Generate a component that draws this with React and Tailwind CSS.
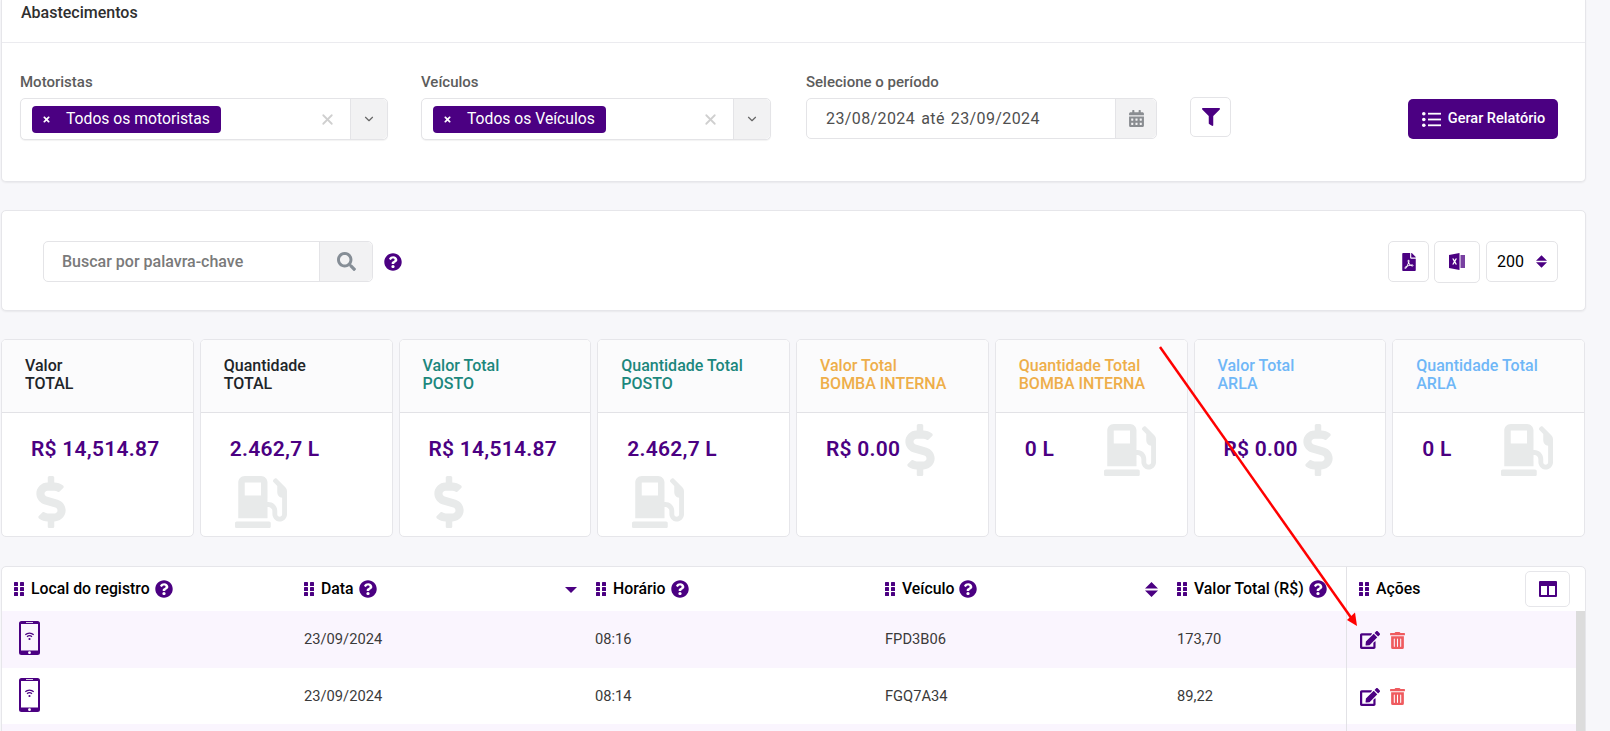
import { ChevronDown, X } from 'lucide-react';
import {
  FaCalendarAlt,
  FaDollarSign,
  FaEdit,
  FaFilePdf,
  FaFilter,
  FaGasPump,
  FaQuestionCircle,
  FaSearch,
  FaTimes,
  FaTrashAlt,
} from 'react-icons/fa';

const stats = [
  { title: 'Valor', sub: 'TOTAL', value: 'R$ 14,514.87', icon: 'money', color: 'text-[#212529]' },
  { title: 'Quantidade', sub: 'TOTAL', value: '2.462,7 L', icon: 'pump', color: 'text-[#212529]' },
  { title: 'Valor Total', sub: 'POSTO', value: 'R$ 14,514.87', icon: 'money', color: 'text-[#1b877d]' },
  { title: 'Quantidade Total', sub: 'POSTO', value: '2.462,7 L', icon: 'pump', color: 'text-[#1b877d]' },
  { title: 'Valor Total', sub: 'BOMBA INTERNA', value: 'R$ 0.00', icon: 'money', color: 'text-[#eeae4a]' },
  { title: 'Quantidade Total', sub: 'BOMBA INTERNA', value: '0 L', icon: 'pump', color: 'text-[#eeae4a]' },
  { title: 'Valor Total', sub: 'ARLA', value: 'R$ 0.00', icon: 'money', color: 'text-[#6fb7f7]' },
  { title: 'Quantidade Total', sub: 'ARLA', value: '0 L', icon: 'pump', color: 'text-[#6fb7f7]' },
];

const rows = [
  { date: '23/09/2024', time: '08:16', plate: 'FPD3B06', total: '173,70' },
  { date: '23/09/2024', time: '08:14', plate: 'FGQ7A34', total: '89,22' },
  { date: '', time: '', plate: '', total: '' },
];

function Grip() {
  return (
    <svg width="10" height="14" viewBox="0 0 10 14" className="shrink-0 text-[#4b0082]" fill="currentColor">
      <rect x="0" y="0" width="4" height="4" rx="0.6" />
      <rect x="6" y="0" width="4" height="4" rx="0.6" />
      <rect x="0" y="5" width="4" height="4" rx="0.6" />
      <rect x="6" y="5" width="4" height="4" rx="0.6" />
      <rect x="0" y="10" width="4" height="4" rx="0.6" />
      <rect x="6" y="10" width="4" height="4" rx="0.6" />
    </svg>
  );
}

function SortBoth({ w, h }) {
  return (
    <svg width={w} height={h} viewBox="0 0 13 15" className="text-[#4b0082]" fill="currentColor">
      <path d="M6.500 0 13 6.500H0zM0 8.500h13L6.500 15z" />
    </svg>
  );
}

function SortDown() {
  return (
    <svg width="12" height="6" viewBox="0 0 12 6" className="text-[#4b0082]" fill="currentColor">
      <path d="M0 0h12L6 6z" />
    </svg>
  );
}

function PhoneIcon() {
  return (
    <svg width="21" height="34" viewBox="0 0 21 34" className="text-[#4b0082]">
      <path
        fill="currentColor"
        fillRule="evenodd"
        d="M2.500 0h16A2.500 2.500 0 0 1 21 2.500v29a2.500 2.500 0 0 1-2.500 2.500h-16A2.500 2.500 0 0 1 0 31.500v-29A2.500 2.500 0 0 1 2.500 0zM2 3v26.500h17V3z"
      />
      <circle cx="10.500" cy="31.700" r="1.400" fill="#fff" />
      <rect x="7" y="1.200" width="7" height="0.800" fill="#fff" />
      <path d="M6.300 13.800a6 6 0 0 1 8.400 0M8 15.800a3.600 3.600 0 0 1 5 0" fill="none" stroke="currentColor" strokeWidth="1.200" />
      <circle cx="10.500" cy="18" r="1.100" fill="currentColor" />
    </svg>
  );
}

function ExcelIcon() {
  return (
    <svg width="16" height="17" viewBox="0 0 16 17" className="text-[#4b0082]" fill="currentColor">
      <path d="M0 2 10.500 0v17L0 15z" />
      <path d="M11.500 2H16v13h-4.500z" opacity="0.75" />
      <path d="M3.200 5.500h1.500l.9 1.800.9-1.800H8L6.400 8.500 8 11.500H6.500l-.9-1.800-.9 1.800H3.200l1.600-3z" fill="#fff" />
    </svg>
  );
}

function ListIcon() {
  return (
    <svg width="19" height="15" viewBox="0 0 19 15" fill="currentColor">
      <circle cx="1.800" cy="1.800" r="1.800" />
      <circle cx="1.800" cy="7.500" r="1.800" />
      <circle cx="1.800" cy="13.200" r="1.800" />
      <rect x="6" y="0.800" width="13" height="1.800" />
      <rect x="6" y="6.600" width="13" height="1.800" />
      <rect x="6" y="12.400" width="13" height="1.800" />
    </svg>
  );
}

function ColumnsIcon() {
  return (
    <svg width="18" height="16" viewBox="0 0 18 16" className="text-[#4b0082]">
      <path
        fill="currentColor"
        fillRule="evenodd"
        d="M1 0h16a1 1 0 0 1 1 1v14a1 1 0 0 1-1 1H1a1 1 0 0 1-1-1V1a1 1 0 0 1 1-1zm1 5v9h6V5zm8 0v9h6V5z"
      />
    </svg>
  );
}

function MultiSelect({ label, tag, width }) {
  return (
    <div className={width}>
      <label className="block text-[15px] leading-[20px] font-medium text-[#5c5c5c] mb-[6px]">{label}</label>
      <div className="flex h-[42px] rounded-[5px] border border-[#e4e4e7] bg-white shadow-[0_1px_1px_rgba(0,0,0,0.05)]">
        <div className="flex-1 flex items-center pl-[11px] pr-[14px]">
          <span className="flex items-center h-[27px] rounded-[4px] bg-[#4b0082] text-white text-[15.700px] pl-[10px] pr-[11px]">
            <FaTimes className="w-[9px] h-[9px] mr-[15px]" />
            {tag}
          </span>
          <X className="ml-auto w-[17px] h-[17px] text-[#cfcfcf]" strokeWidth={2.500} />
        </div>
        <div className="w-[37px] flex items-center justify-center bg-[#f2f2f3] border-l border-[#e4e4e7] rounded-r-[5px]">
          <ChevronDown className="w-[14px] h-[14px] text-[#666]" strokeWidth={2} />
        </div>
      </div>
    </div>
  );
}

function StatCard({ stat }) {
  const Icon = stat.icon === 'money' ? FaDollarSign : FaGasPump;
  return (
    <div className="rounded-[5px] border border-[#e6e6ea] bg-white overflow-hidden flex flex-col">
      <div className={`h-[73px] shrink-0 bg-[#fbfbfc] border-b border-[#e2e2e6] pl-[23px] pt-[17px] text-[16px] leading-[18px] font-medium whitespace-nowrap ${stat.color}`}>
        <div>{stat.title}</div>
        <div>{stat.sub}</div>
      </div>
      <div className="flex-1 flex flex-wrap content-start pl-[29px] pr-[25px] pt-[11px]">
        <div className="h-[52px] min-w-[74px] flex items-center pb-[1px] text-[21px] tracking-[0.25px] font-semibold text-[#4b0082] whitespace-nowrap">
          {stat.value}
        </div>
        <div className="pl-[5px] w-[60px] h-[52px]">
          <Icon className={stat.icon === 'money' ? 'w-[30px] h-[52px] text-[#e8eaea]' : 'w-[52px] h-[52px] text-[#e8eaea]'} />
        </div>
      </div>
    </div>
  );
}

function HeaderCell({ label, help = true, sort }) {
  return (
    <div className="flex items-center pl-[12px] pr-[8px] h-full">
      <Grip />
      <span className="ml-[7px] text-[15.800px] font-medium text-black whitespace-nowrap">{label}</span>
      {help && <FaQuestionCircle className="ml-[5px] w-[18px] h-[18px] text-[#4b0082]" />}
      {sort === 'down' && (
        <span className="ml-auto mr-[-1px] mt-[2px]">
          <SortDown />
        </span>
      )}
      {sort === 'both' && (
        <span className="ml-auto mr-[-1px] flex">
          <SortBoth w={13} h={15} />
        </span>
      )}
    </div>
  );
}

export default function App() {
  return (
    <div className="relative h-screen overflow-hidden bg-[#f7f7fa] pl-px pr-[24px] font-['Roboto',sans-serif] text-[#212529]">
      {/* Filtros */}
      <div className="h-[182px] bg-white border-x border-b border-[#e6e6ea] rounded-b-[5px] shadow-[0_1px_2px_rgba(0,0,0,0.06)]">
        <div className="h-[43px] border-b border-[#ebebef] pl-[19px] pt-[3px] text-[16px] leading-[20px] font-medium text-[#2f2f2f]">
          Abastecimentos
        </div>
        <div className="flex items-start pl-[18px] pt-[29px]">
          <MultiSelect label="Motoristas" tag="Todos os motoristas" width="w-[368px]" />
          <div className="w-[33px]" />
          <MultiSelect label="Veículos" tag="Todos os Veículos" width="w-[350px]" />
          <div className="w-[35px]" />
          <div className="w-[351px]">
            <label className="block text-[15px] leading-[20px] font-medium text-[#5c5c5c] mb-[6px]">Selecione o período</label>
            <div className="flex h-[41px] rounded-[5px] border border-[#e4e4e7] bg-white">
              <div className="flex-1 flex items-center pl-[19px] text-[16px] tracking-[0.4px] text-[#4f4f4f] whitespace-pre">
                <span>23/08/2024</span>
                <span className="mx-[6px]">até</span>
                <span>23/09/2024</span>
              </div>
              <div className="w-[41px] flex items-center justify-center bg-[#f2f2f3] border-l border-[#e4e4e7] rounded-r-[5px]">
                <FaCalendarAlt className="w-[15px] h-[17px] text-[#8a8d91]" />
              </div>
            </div>
          </div>
          <button className="ml-[33px] mt-[25px] w-[41px] h-[40px] flex items-center justify-center rounded-[5px] border border-[#e4e4e7] bg-white text-[#4b0082]">
            <FaFilter className="w-[18px] h-[18px]" />
          </button>
          <button className="ml-[177px] mt-[27px] w-[150px] h-[40px] flex items-center justify-center gap-[7px] pl-[1px] rounded-[5px] bg-[#4b0082] text-white text-[14.500px] font-medium">
            <ListIcon />
            Gerar Relatório
          </button>
        </div>
      </div>

      {/* Busca */}
      <div className="mt-[28px] h-[101px] bg-white border border-[#e6e6ea] rounded-[5px] shadow-[0_1px_2px_rgba(0,0,0,0.06)] flex items-center pl-[41px] pr-[27px] pt-[2px]">
        <div className="flex w-[330px] h-[41px] rounded-[5px] border border-[#e4e4e7]">
          <div className="flex-1 flex items-center pl-[18px] text-[16px] font-medium text-[#7a7a7a]">Buscar por palavra-chave</div>
          <div className="w-[53px] flex items-center justify-center bg-[#f2f2f3] border-l border-[#e4e4e7] rounded-r-[5px]">
            <FaSearch className="w-[19px] h-[19px] text-[#868e96]" />
          </div>
        </div>
        <FaQuestionCircle className="ml-[11px] w-[18px] h-[18px] text-[#4b0082]" />
        <div className="ml-auto flex items-center gap-[5px]">
          <div className="w-[41px] h-[41px] flex items-center justify-center rounded-[5px] border border-[#e4e4e7]">
            <FaFilePdf className="w-[14px] h-[18px] text-[#4b0082]" />
          </div>
          <div className="w-[46px] h-[42px] flex items-center justify-center rounded-[5px] border border-[#e4e4e7]">
            <ExcelIcon />
          </div>
          <div className="ml-[1px] w-[72px] h-[41px] flex items-center justify-between pl-[10px] pr-[10px] rounded-[5px] border border-[#e4e4e7] text-[16px] text-black">
            200
            <SortBoth w={11} h={13} />
          </div>
        </div>
      </div>

      {/* Totais */}
      <div className="mt-[28px] mr-px h-[198px] grid grid-cols-8 gap-[6px]">
        {stats.map((stat, i) => (
          <StatCard key={i} stat={stat} />
        ))}
      </div>

      {/* Tabela */}
      <div className="mt-[29px] bg-white border border-[#e6e6ea] rounded-t-[5px] h-[300px]">
        <div className="grid grid-cols-[290px_292px_289px_292px_181px_1fr] h-[44px]">
          <HeaderCell label="Local do registro" />
          <HeaderCell label="Data" sort="down" />
          <HeaderCell label="Horário" />
          <HeaderCell label="Veículo" sort="both" />
          <HeaderCell label="Valor Total (R$)" />
          <div className="border-l border-[#e2e2e6] flex items-center">
            <HeaderCell label="Ações" help={false} />
            <button className="ml-auto mr-[15px] w-[45px] h-[36px] flex items-center justify-center rounded-[5px] border border-[#e6e6ea]">
              <ColumnsIcon />
            </button>
          </div>
        </div>
        <div className="flex">
          <div className="flex-1">
            {rows.map((row, i) => (
              <div key={i} className={`grid grid-cols-[290px_292px_289px_292px_181px_1fr] h-[56.500px] text-[14.700px] text-[#3a3a3a] ${i % 2 === 0 ? 'bg-[#faf5fe]' : 'bg-white'}`}>
                <div className="flex items-center pl-[17px] pb-[2px]">{row.date && <PhoneIcon />}</div>
                <div className="flex items-center pl-[12px]">{row.date}</div>
                <div className="flex items-center pl-[11px]">{row.time}</div>
                <div className="flex items-center pl-[12px]">{row.plate}</div>
                <div className="flex items-center pl-[12px]">{row.total}</div>
                <div className="flex items-center gap-[10px] pl-[13px] pt-[2px] border-l border-[#e2e2e6]">
                  {row.date && (
                    <>
                      <FaEdit className="w-[20px] h-[18px] text-[#4b0082]" />
                      <FaTrashAlt className="w-[15px] h-[17px] text-[#ef5b5f]" />
                    </>
                  )}
                </div>
              </div>
            ))}
          </div>
          <div className="w-[9px] h-[170px] bg-[#dcdcdc]" />
        </div>
      </div>

      {/* Seta vermelha sobre a tela */}
      <svg className="absolute inset-0 w-full h-full pointer-events-none" viewBox="0 0 1610 731">
        <line x1="1160" y1="347" x2="1352" y2="619" stroke="#ff0000" strokeWidth="2.500" />
        <polygon points="1357,626 1347,620 1355,612.500" fill="#ff0000" />
      </svg>
    </div>
  );
}
